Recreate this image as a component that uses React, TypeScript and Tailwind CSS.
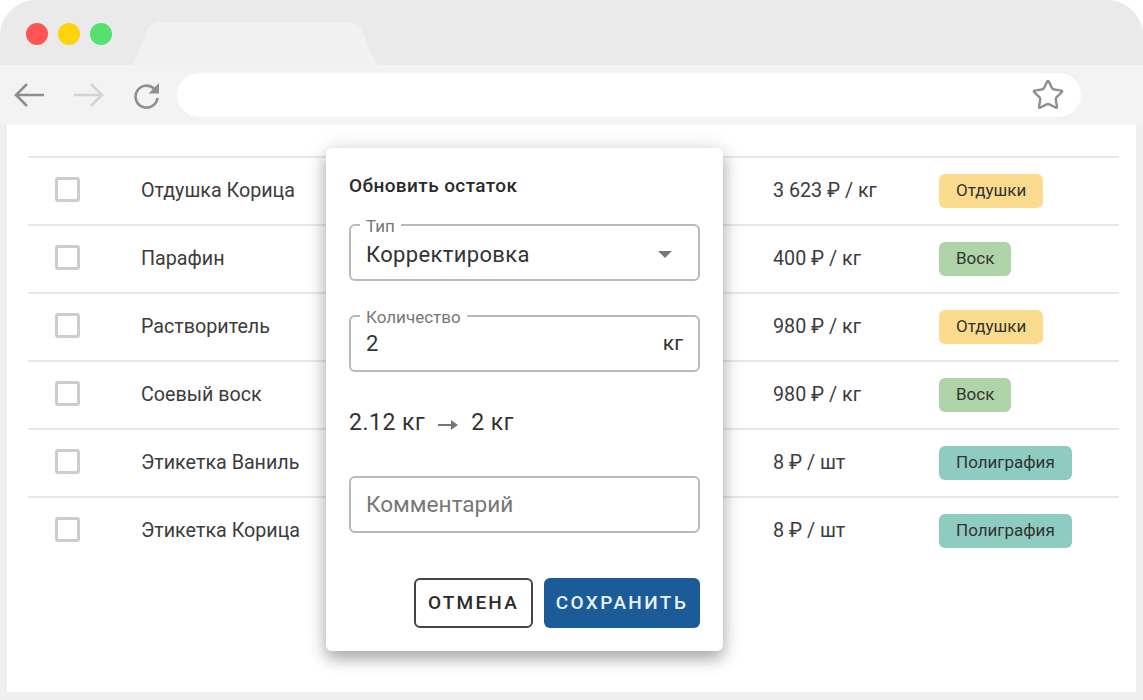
import React from "react";
import { Star } from "lucide-react";

const rows = [
  { name: "Отдушка Корица", price: "3 623 ₽ / кг", tag: "Отдушки", color: "bg-[#fbdb8d]" },
  { name: "Парафин", price: "400 ₽ / кг", tag: "Воск", color: "bg-[#aed4a8]" },
  { name: "Растворитель", price: "980 ₽ / кг", tag: "Отдушки", color: "bg-[#fbdb8d]" },
  { name: "Соевый воск", price: "980 ₽ / кг", tag: "Воск", color: "bg-[#aed4a8]" },
  { name: "Этикетка Ваниль", price: "8 ₽ / шт", tag: "Полиграфия", color: "bg-[#8ecbc0]" },
  { name: "Этикетка Корица", price: "8 ₽ / шт", tag: "Полиграфия", color: "bg-[#8ecbc0]" },
];

const Arrow = ({ flip, color }: { flip?: boolean; color: string }) => (
  <svg width="32" height="26" viewBox="0 0 32 26" fill="none" stroke={color} strokeWidth="2.6" className={flip ? "-scale-x-100" : ""}>
    <path d="M31 13H3M14 2L3 13l11 11" />
  </svg>
);

const App = () => {
  return (
    <div className="relative w-[1143px] h-[700px] overflow-hidden bg-white font-['Roboto',sans-serif] text-[#333]">
      <div className="flex flex-col h-full rounded-t-[36px] overflow-hidden bg-[#efefef]">
        {/* tab strip */}
        <div className="flex items-end h-[65px] bg-[#eaeaea]">
          <div className="flex self-start gap-[10px] mt-[23px] ml-[26px]">
            <div className="w-[22px] h-[22px] rounded-full bg-[#ff5354]" />
            <div className="w-[22px] h-[22px] rounded-full bg-[#ffd30c]" />
            <div className="w-[22px] h-[22px] rounded-full bg-[#54e16f]" />
          </div>
          <svg width="246" height="43" viewBox="0 0 246 43" className="ml-[21px]" fill="#f1f1f1">
            <path d="M0 43C4 36 8 26 11 15 14 5 20 0 30 0H214C224 0 229 5 232 15 235 26 240 36 246 43Z" />
          </svg>
        </div>

        {/* toolbar */}
        <div className="flex items-center h-[60px] bg-[#f3f3f3]">
          <div className="ml-[13px]">
            <Arrow color="#8f8f8f" />
          </div>
          <div className="ml-[28px]">
            <Arrow flip color="#d4d4d4" />
          </div>
          <svg width="28" height="28" viewBox="0 0 28 28" className="ml-[28px]" fill="none">
            <path d="M21 7.5A11 11 0 1 0 24.5 17" stroke="#8f8f8f" strokeWidth="2.6" />
            <path d="M15.5 12.5L26 2v10.5z" fill="#8f8f8f" />
          </svg>
          <div className="flex items-center justify-end w-[904px] h-[44px] ml-[16px] pr-[16px] rounded-full bg-white">
            <Star size={34} strokeWidth={1.7} className="text-[#8f8f8f]" />
          </div>
        </div>

        {/* page */}
        <div className="flex-1 mx-[7px] mb-[8px] pl-[21px] pr-[17px] pt-[31px] bg-white">
          {rows.map((row) => (
            <div key={row.name} className="flex items-center h-[68px] border-t-2 border-[#e8e8e8] text-[19.7px]">
              <div className="w-[25px] h-[25px] ml-[27px] mb-[4px] rounded-[3px] border-[3px] border-[#cdcdcd]" />
              <div className="w-[632px] ml-[61px] text-[#3c3c3c]">{row.name}</div>
              <div className="w-[166px] text-[#3c3c3c]">{row.price}</div>
              <div className={`flex items-center h-[34px] px-[17px] rounded-[6px] text-[17px] text-[#333] ${row.color}`}>{row.tag}</div>
            </div>
          ))}
        </div>
      </div>

      {/* dialog */}
      <div className="absolute left-[326px] top-[148px] flex flex-col w-[397px] h-[503px] px-[23px] rounded-[6px] bg-white shadow-[0_8px_16px_rgba(0,0,0,0.3),0_0_24px_rgba(0,0,0,0.1)]">
        <div className="mt-[27px] text-[19px] leading-[21px] font-medium tracking-[0.4px] text-[#2a2a2a]">Обновить остаток</div>

        <div className="relative flex items-center justify-between h-[57px] mt-[28px] pl-[15px] pr-[26px] pt-[3px] rounded-[6px] border-2 border-[#b9b9b9] text-[22px]">
          <span className="absolute -top-[8px] left-[9px] px-[6px] bg-white text-[17px] leading-[16px] text-[#777]">Тип</span>
          <span className="tracking-[0.35px]">Корректировка</span>
          <svg width="14" height="7" viewBox="0 0 14 7" fill="#777">
            <path d="M0 0h14L7 7z" />
          </svg>
        </div>

        <div className="relative flex items-center justify-between h-[57px] mt-[34px] pl-[15px] pr-[15px] rounded-[6px] border-2 border-[#b9b9b9] text-[22px]">
          <span className="absolute -top-[8px] left-[9px] px-[6px] bg-white text-[17px] leading-[16px] text-[#777]">Количество</span>
          <span>2</span>
          <span className="text-[21px]">кг</span>
        </div>

        <div className="flex items-center h-[26px] mt-[38px] text-[23px] tracking-[0.5px] text-[#333]">
          <span>2.12 кг</span>
          <svg width="20" height="12" viewBox="0 0 20 12" className="ml-[13px] mr-[13px] mt-[3px]" fill="#777">
            <path d="M0 5h13V1l7 5-7 5V7H0z" />
          </svg>
          <span>2 кг</span>
        </div>

        <div className="flex items-center h-[57px] mt-[40px] pl-[15px] rounded-[6px] border-2 border-[#b9b9b9] text-[22.6px] text-[#777]">Комментарий</div>

        <div className="flex justify-end gap-[11px] mt-[45px]">
          <div className="flex items-center justify-center w-[119px] h-[50px] rounded-[6px] border-2 border-[#444] text-[19px] font-medium tracking-[2.2px] text-[#2a2a2a]">ОТМЕНА</div>
          <div className="flex items-center justify-center w-[156px] h-[50px] rounded-[6px] bg-[#1b5c98] text-[19px] font-medium tracking-[2.4px] text-[#e8f1f8]">СОХРАНИТЬ</div>
        </div>
      </div>
    </div>
  );
};

export default App;
